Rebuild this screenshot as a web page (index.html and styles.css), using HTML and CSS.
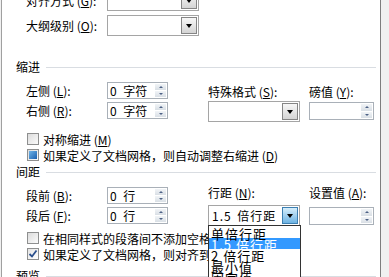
FILE: index.html
```html
<!DOCTYPE html>
<html lang="zh">
<head>
    <meta charset="UTF-8">
    <title>段落</title>
    <link rel="stylesheet" href="styles.css">
</head>
<body>
<div class="window">
    <div class="panel">
        <div class="rows">
            <div class="row">
                <span class="label">对齐方式 (<u>G</u>):</span>
                <div class="select"><span class="value"></span><span class="drop-btn"><i class="tri"></i></span></div>
            </div>
            <div class="row">
                <span class="label">大纲级别 (<u>O</u>):</span>
                <div class="select"><span class="value"></span><span class="drop-btn"><i class="tri"></i></span></div>
            </div>
        </div>

        <div class="group-title first"><span>缩进</span></div>
        <div class="group-body">
            <div class="col-left">
                <div class="row spin-row">
                    <span class="label">左侧 (<u>L</u>):</span>
                    <div class="spin"><span class="value">0 字符</span><span class="spin-btns"><i class="up"></i><i class="down"></i></span></div>
                </div>
                <div class="row spin-row">
                    <span class="label">右侧 (<u>R</u>):</span>
                    <div class="spin"><span class="value">0 字符</span><span class="spin-btns"><i class="up"></i><i class="down"></i></span></div>
                </div>
            </div>
            <div class="field wide indent-field">
                <span class="field-label">特殊格式 (<u>S</u>):</span>
                <div class="select"><span class="value"></span><span class="drop-btn"><i class="tri"></i></span></div>
            </div>
            <div class="field narrow indent-field">
                <span class="field-label">磅值 (<u>Y</u>):</span>
                <div class="spin"><span class="value"></span><span class="spin-btns"><i class="up"></i><i class="down"></i></span></div>
            </div>
        </div>
        <div class="checks first-checks">
            <div class="check"><span class="box"></span>对称缩进 (<u>M</u>)</div>
            <div class="check"><span class="box mixed"></span>如果定义了文档网格，则自动调整右缩进 (<u>D</u>)</div>
        </div>

        <div class="group-title"><span>间距</span></div>
        <div class="group-body">
            <div class="col-left">
                <div class="row spin-row">
                    <span class="label">段前 (<u>B</u>):</span>
                    <div class="spin"><span class="value">0 行</span><span class="spin-btns"><i class="up"></i><i class="down"></i></span></div>
                </div>
                <div class="row spin-row">
                    <span class="label">段后 (<u>F</u>):</span>
                    <div class="spin"><span class="value">0 行</span><span class="spin-btns"><i class="up"></i><i class="down"></i></span></div>
                </div>
            </div>
            <div class="field wide spacing-field">
                <span class="field-label">行距 (<u>N</u>):</span>
                <div class="select open">
                    <span class="value">1.5 倍行距</span><span class="drop-btn hot"><i class="tri"></i></span>
                    <ul class="drop-list">
                        <li>单倍行距</li>
                        <li class="selected">1.5 倍行距</li>
                        <li>2 倍行距</li>
                        <li>最小值</li>
                        <li>固定值</li>
                        <li>多倍行距</li>
                    </ul>
                </div>
            </div>
            <div class="field narrow spacing-field">
                <span class="field-label">设置值 (<u>A</u>):</span>
                <div class="spin"><span class="value"></span><span class="spin-btns"><i class="up"></i><i class="down"></i></span></div>
            </div>
        </div>
        <div class="checks second-checks">
            <div class="check"><span class="box"></span>在相同样式的段落间不添加空格 (<u>C</u>)</div>
            <div class="check"><span class="box checked"><svg width="10" height="10" viewBox="0 0 10 10"><path d="M1.5 5 L4 7.5 L8.5 1.5" fill="none" stroke="#2a4f8c" stroke-width="1.8"/></svg></span>如果定义了文档网格，则对齐到网格 (<u>W</u>)</div>
        </div>

        <div class="group-title last"><span>预览</span></div>
    </div>
</div>
</body>
</html>
```

FILE: styles.css
```css
body {
    margin: 0;
    font-family: "Noto Sans CJK SC", "Liberation Sans", sans-serif;
    font-size: 12px;
    color: #000;
}
u {
    text-decoration: underline;
}
.window {
    display: flex;
    width: 389px;
    height: 277px;
    overflow: hidden;
    background: #f0f0f0;
}
.panel {
    box-sizing: border-box;
    width: 380px;
    height: 277px;
    margin-left: 1px;
    padding: 0 4px 0 14px;
    border-left: 1px solid #a0a0a0;
    border-right: 1px solid #7d7d7d;
    background: #fff;
    overflow: hidden;
}
.rows {
    display: flex;
    flex-direction: column;
    gap: 4px;
    margin-top: -10px;
}
.row {
    display: flex;
    align-items: center;
    padding-left: 10px;
}
.label {
    width: 81px;
    line-height: 14px;
    white-space: nowrap;
}

/* 下拉框 */
.select {
    position: relative;
    display: flex;
    box-sizing: border-box;
    width: 92px;
    height: 21px;
    border: 1px solid #a5a5a5;
    background: #fff;
}
.select .value {
    flex: 1;
    padding-left: 3px;
    line-height: 19px;
    letter-spacing: 1px;
    word-spacing: 2px;
    white-space: nowrap;
}
.drop-btn {
    display: flex;
    align-items: center;
    justify-content: center;
    box-sizing: border-box;
    width: 16px;
    margin: 1px;
    border: 1px solid #858585;
    background: linear-gradient(#f7f7f7, #d4d4d4);
}
.drop-btn.hot {
    border-color: #3c7fb1;
    background: linear-gradient(#d6eefb, #6db3e3);
}
.tri {
    width: 0;
    height: 0;
    border-left: 3px solid transparent;
    border-right: 3px solid transparent;
    border-top: 4px solid #000;
}

/* 微调框 */
.spin {
    display: flex;
    box-sizing: border-box;
    width: 61px;
    height: 17px;
    border: 1px solid #a9b0b8;
    background: #fff;
}
.spin .value {
    flex: 1;
    padding-left: 2px;
    line-height: 15px;
    word-spacing: 4px;
    white-space: nowrap;
}
.spin-btns {
    display: flex;
    flex-direction: column;
    width: 11px;
    margin: 1px 1px 1px 0;
    gap: 1px;
}
.spin-btns i {
    flex: 1;
    display: flex;
    align-items: center;
    justify-content: center;
    background: linear-gradient(#f1f4f7, #d9dfe5);
}
.spin-btns .up::before {
    content: "";
    border-left: 2px solid transparent;
    border-right: 2px solid transparent;
    border-bottom: 2px solid #4d6185;
}
.spin-btns .down::before {
    content: "";
    border-left: 2px solid transparent;
    border-right: 2px solid transparent;
    border-top: 2px solid #4d6185;
}

/* 分组标题 */
.group-title {
    display: flex;
    align-items: center;
    height: 14px;
    margin-top: 2px;
    line-height: 14px;
}
.group-title::after {
    content: "";
    flex: 1;
    height: 1px;
    margin-left: 6px;
    background: #d9dde2;
}
.group-title.first {
    margin-top: 24px;
}
.group-title.last {
    margin-top: 7px;
}

.group-body {
    display: flex;
    margin-top: 8px;
    padding-left: 10px;
}
.col-left {
    display: flex;
    flex-direction: column;
    gap: 3px;
    width: 182px;
}
.col-left .row {
    padding-left: 0;
}
.field {
    display: flex;
    flex-direction: column;
}
.field.wide {
    width: 92px;
    margin-right: 9px;
}
.field.narrow .spin {
    width: 65px;
    height: 18px;
}
.field-label {
    line-height: 14px;
    white-space: nowrap;
}
.indent-field {
    margin-top: 3px;
}
.indent-field .select {
    margin-top: 2px;
}
.indent-field .spin {
    margin-top: 3px;
}
.spacing-field {
    margin-top: -1px;
}
.spacing-field .select {
    margin-top: 5px;
}
.spacing-field .spin {
    margin-top: 7px;
}

/* 复选框 */
.checks {
    display: flex;
    flex-direction: column;
    padding-left: 11px;
}
.first-checks {
    margin-top: 9px;
}
.second-checks {
    margin-top: 4px;
}
.check {
    display: flex;
    align-items: center;
    height: 16px;
    white-space: nowrap;
}
.box {
    display: flex;
    align-items: center;
    justify-content: center;
    box-sizing: border-box;
    width: 12px;
    height: 12px;
    margin-right: 4px;
    border: 1px solid #8e8f8f;
    background: linear-gradient(135deg, #dcdcdc, #fbfbfb);
}
.box.mixed::before {
    content: "";
    width: 8px;
    height: 8px;
    background: linear-gradient(135deg, #6fb4e8, #1b5fae);
}
.box.checked {
    background: linear-gradient(135deg, #e4e4e4, #fff);
}

/* 展开的下拉列表 */
.drop-list {
    position: absolute;
    top: 19px;
    left: -1px;
    z-index: 2;
    box-sizing: border-box;
    width: 93px;
    margin: 0;
    padding: 1px 0 0;
    list-style: none;
    border: 1px solid #333;
    background: #fff;
    font-size: 13px;
    letter-spacing: 1px;
}
.drop-list li {
    height: 11px;
    padding-left: 2px;
    line-height: 13px;
    white-space: nowrap;
}
.drop-list .selected {
    background: #3399ff;
    color: #fff;
}
```
